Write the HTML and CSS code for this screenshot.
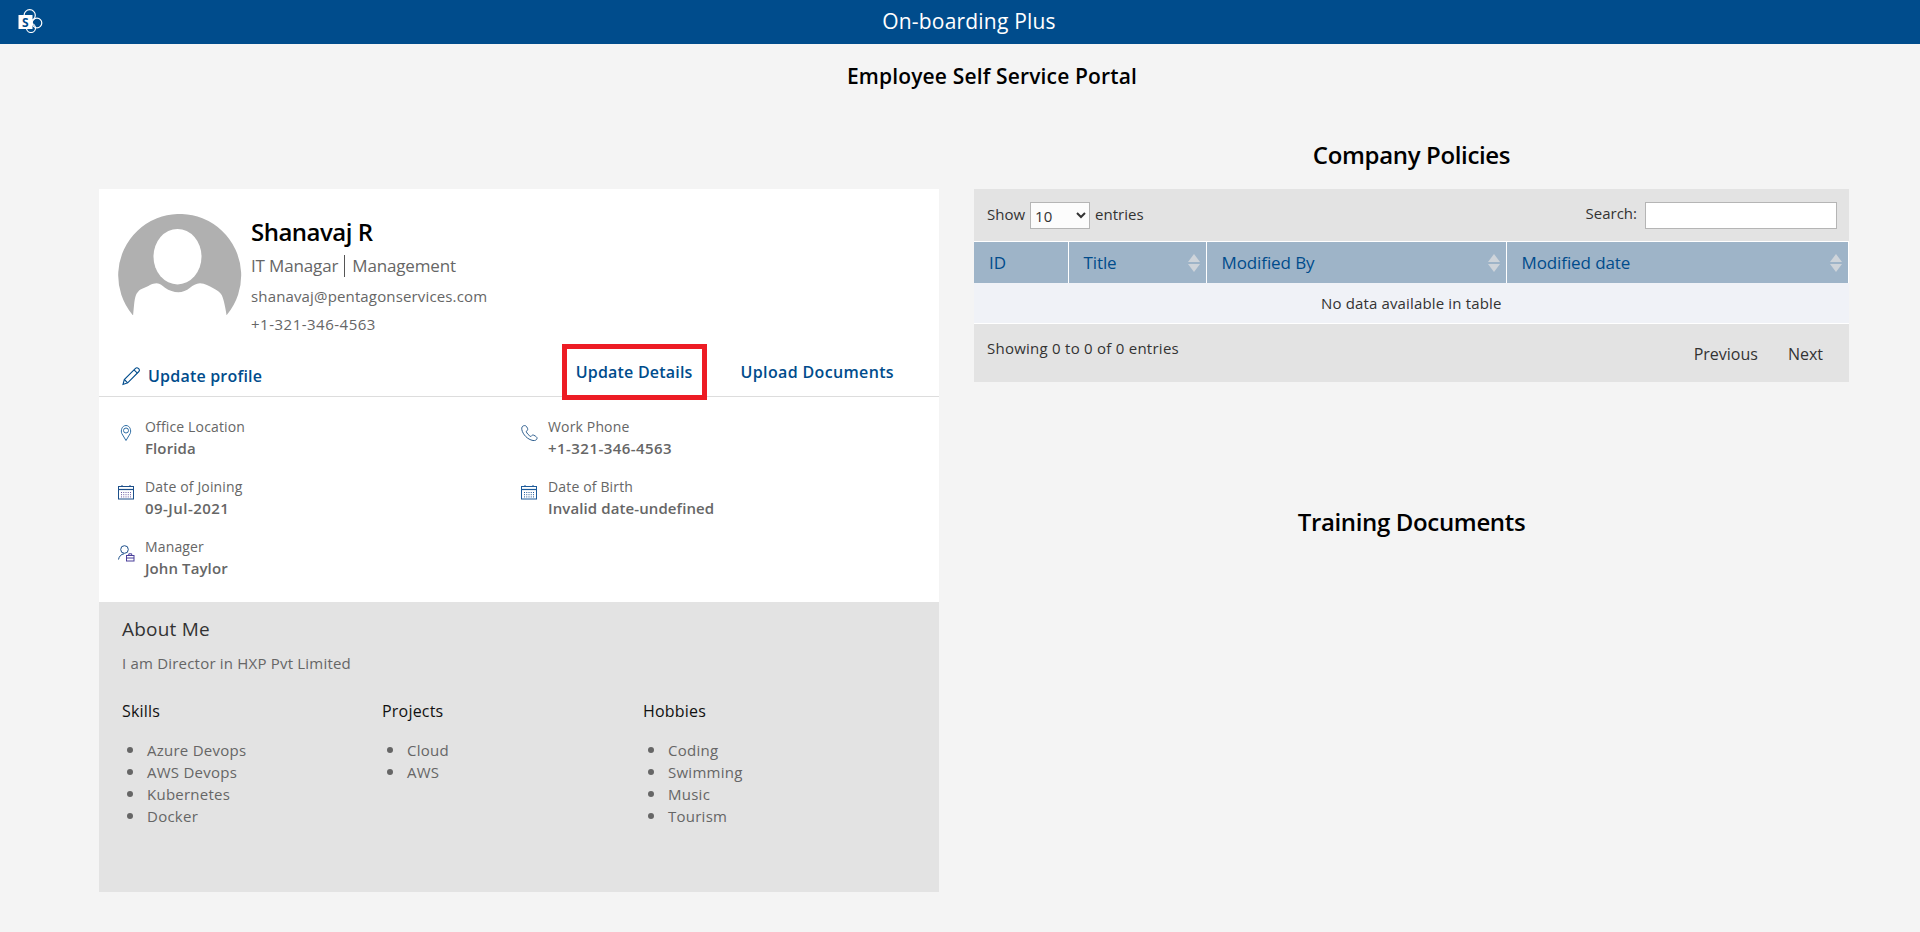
FILE: index.html
```html
<!DOCTYPE html>
<html lang="en">
<head>
    <meta charset="UTF-8">
    <title>On-boarding Plus</title>
    <link rel="stylesheet" href="styles.css">
</head>
<body>

    <header class="topbar">
        <svg class="sp-logo" viewBox="0 0 26 24" width="26" height="24">
            <circle cx="11.7" cy="6.3" r="5.6" fill="none" stroke="#fff" stroke-width="1.2"/>
            <circle cx="19" cy="14" r="4.8" fill="none" stroke="#fff" stroke-width="1.2"/>
            <circle cx="13" cy="19" r="4.5" fill="none" stroke="#fff" stroke-width="1.2"/>
            <rect x="0.5" y="6" width="14" height="14" fill="#fff"/>
            <text x="4" y="17.5" class="sp-letter">S</text>
        </svg>
        <span class="topbar-title">On-boarding Plus</span>
    </header>

    <main class="page">
        <h1 class="page-title">Employee Self Service Portal</h1>

        <div class="columns">
            <section class="profile">
                <div class="profile-top">
                    <svg class="avatar" viewBox="0 0 124 104" width="124" height="104">
                        <path d="M14.600 101A61.500 61.500 0 1 1 108.800 101Z" fill="#b0b0b0"/>
                        <ellipse cx="59.500" cy="42.700" rx="24" ry="27.700" fill="#fff"/>
                        <path d="M15 102C16 94 16 86 18 81C20 77 22 75.500 25.300 74.300C30 72.500 34 69.300 38.700 69.300C42 69.300 44.500 72 47 73.700C51 76.500 56 78.300 60.300 78.300C64.500 78.300 68.500 76.500 72 73.700C75 71.500 78 69.300 82 69.300C87 69.300 91 72 95.300 74.300C99 76.300 102 78 103.700 81C106 86 107.500 94 108.700 102Z" fill="#fff"/>
                    </svg>
                    <div class="who">
                        <h2 class="name">Shanavaj R</h2>
                        <p class="role"><span class="role-job">IT Managar</span><span>Management</span></p>
                        <p class="contact">shanavaj@pentagonservices.com</p>
                        <p class="contact contact-phone">+1-321-346-4563</p>
                    </div>
                </div>

                <div class="actions">
                    <a class="action action-edit" href="#">
                        <svg viewBox="0 0 20 20" width="20" height="20" fill="none" stroke="#004c8c" stroke-width="1.1">
                            <path d="M2 18.500L3.300 13.500L14.500 2.300C15.300 1.500 16.500 1.500 17.300 2.300L17.900 2.900C18.600 3.700 18.600 4.800 17.900 5.500L6.700 16.800Z"/>
                            <path d="M3.300 13.500L6.700 16.800M13 3.800L16.400 7.100"/>
                        </svg>
                        Update profile
                    </a>
                    <div class="action-group">
                        <a class="action action-marked" href="#">Update Details<span class="red-box"></span></a>
                        <a class="action action-upload" href="#">Upload Documents</a>
                    </div>
                </div>

                <div class="details">
                    <div class="detail">
                        <svg viewBox="0 0 17 17" width="17" height="17" fill="none" stroke="#2f6ea5" stroke-width="1">
                            <path d="M8 15.500L3.800 8.500C2.500 5.500 4 .5 8 .5C12 .5 13.500 5.500 12.200 8.500Z"/>
                            <circle cx="8" cy="5.500" r="2.500"/>
                        </svg>
                        <div><span class="detail-label">Office Location</span><b class="detail-value">Florida</b></div>
                    </div>
                    <div class="detail">
                        <svg viewBox="0 0 17 17" width="17" height="17" fill="none" stroke="#2f5f8f" stroke-width="1">
                            <path d="M2.500 .8C1.200 1.200 .5 2.500 .8 4.500C1.800 9.500 6.500 14.500 12 15.500C14 15.800 15.800 15 16 13.500C16.200 12.500 15.500 11.800 14.500 11.200L13 10.300C12 9.800 11.200 10 10.500 10.800L9.800 11.500C7.800 10.500 6 8.500 5.200 6.500L6 5.800C6.800 5 6.900 4.300 6.500 3.300L5.500 1.500C4.800 .6 3.600 .4 2.500 .8Z"/>
                        </svg>
                        <div><span class="detail-label">Work Phone</span><b class="detail-value detail-num">+1-321-346-4563</b></div>
                    </div>
                    <div class="detail">
                        <svg viewBox="0 0 17 17" width="17" height="17" fill="none" stroke="#1c4f8a">
                            <rect x=".5" y="1.500" width="15" height="12.500"/>
                            <path d="M0 4.500H16" stroke-width="1.200"/>
                            <path d="M4 0V2M12 0V2"/>
                            <path d="M3 7.500H13M3 9.700H13M3 11.900H13" stroke="#6a5aa0" stroke-dasharray="1 1.250"/>
                        </svg>
                        <div><span class="detail-label">Date of Joining</span><b class="detail-value detail-num">09-Jul-2021</b></div>
                    </div>
                    <div class="detail">
                        <svg viewBox="0 0 17 17" width="17" height="17" fill="none" stroke="#1c5a9a">
                            <rect x=".5" y="1.500" width="15" height="12.500"/>
                            <path d="M0 4.500H16" stroke-width="1.200"/>
                            <path d="M4 0V2M12 0V2"/>
                            <path d="M3 7.500H13M3 9.700H13M3 11.900H13" stroke-dasharray="1 1.250"/>
                        </svg>
                        <div><span class="detail-label">Date of Birth</span><b class="detail-value">Invalid date-undefined</b></div>
                    </div>
                    <div class="detail">
                        <svg viewBox="0 0 17 17" width="17" height="17" fill="none" stroke="#1c4f8a" stroke-width="1">
                            <circle cx="6.500" cy="4.500" r="3.800"/>
                            <path d="M.5 14.500C1 11.500 3 9.300 6 8.800"/>
                            <rect x="8.500" y="10.500" width="7.500" height="5.500" stroke="#4a3f9a"/>
                            <path d="M10.800 10.500V8.800H13.700V10.500M8.500 13H16" stroke="#4a3f9a"/>
                        </svg>
                        <div><span class="detail-label">Manager</span><b class="detail-value">John Taylor</b></div>
                    </div>
                </div>

                <div class="about">
                    <h3 class="about-title">About Me</h3>
                    <p class="about-text">I am Director in HXP Pvt Limited</p>
                    <div class="about-lists">
                        <div>
                            <h4>Skills</h4>
                            <ul>
                                <li>Azure Devops</li>
                                <li>AWS Devops</li>
                                <li>Kubernetes</li>
                                <li>Docker</li>
                            </ul>
                        </div>
                        <div>
                            <h4>Projects</h4>
                            <ul>
                                <li>Cloud</li>
                                <li>AWS</li>
                            </ul>
                        </div>
                        <div>
                            <h4>Hobbies</h4>
                            <ul>
                                <li>Coding</li>
                                <li>Swimming</li>
                                <li>Music</li>
                                <li>Tourism</li>
                            </ul>
                        </div>
                    </div>
                </div>
            </section>

            <section class="side">
                <h2 class="side-title">Company Policies</h2>
                <div class="dt">
                    <div class="dt-top">
                        <label class="dt-label">Show
                            <select class="dt-select"><option>10</option></select>
                            entries</label>
                        <label class="dt-label dt-label-search">Search: <input class="dt-search" type="text"></label>
                    </div>
                    <table class="dt-table">
                        <colgroup>
                            <col class="col-id"><col class="col-title"><col class="col-by"><col>
                        </colgroup>
                        <thead>
                            <tr>
                                <th>ID</th>
                                <th class="sortable">Title</th>
                                <th class="sortable">Modified By</th>
                                <th class="sortable">Modified date</th>
                            </tr>
                        </thead>
                        <tbody>
                            <tr><td colspan="4">No data available in table</td></tr>
                        </tbody>
                    </table>
                    <div class="dt-bottom">
                        <span class="dt-info">Showing 0 to 0 of 0 entries</span>
                        <div class="dt-pages"><a href="#">Previous</a><a href="#">Next</a></div>
                    </div>
                </div>
                <h2 class="side-title training">Training Documents</h2>
            </section>
        </div>
    </main>

</body>
</html>
```

FILE: styles.css
```css
* {
    box-sizing: border-box;
}
body {
    font-family: "Open Sans", Arial, sans-serif;
    font-size: 15px;
    background-color: #f4f4f4;
    color: #333;
    margin: 0;
    padding: 0;
}
h1, h2, h3, h4, p, ul {
    margin: 0;
    padding: 0;
}
a {
    text-decoration: none;
}

.topbar {
    position: relative;
    height: 44px;
    padding: 0 0 2px 18px;
    background-color: #004c8c;
    color: white;
    display: flex;
    align-items: center;
    justify-content: center;
}
.sp-logo {
    position: absolute;
    left: 18px;
    top: 9px;
}
.sp-letter {
    font-size: 12px;
    font-weight: 700;
    fill: #004c8c;
}
.topbar-title {
    font-size: 21px;
    letter-spacing: 0.2px;
}

.page {
    padding: 0 35px 0 99px;
}
.page-title {
    font-size: 21px;
    font-weight: 600;
    color: black;
    text-align: center;
    letter-spacing: 0.15px;
    line-height: 28px;
    padding-top: 18px;
}
.columns {
    display: grid;
    grid-template-columns: 840px 875px;
    gap: 35px;
    margin-top: 49px;
}

.profile {
    background-color: white;
    margin-top: 50px;
}
.profile-top {
    display: flex;
    padding: 25px 0 0 19px;
}
.avatar {
    flex: none;
}
.who {
    margin-left: 9px;
}
.name {
    font-size: 24px;
    font-weight: 600;
    line-height: 30px;
    color: black;
    letter-spacing: -0.5px;
    margin-top: 3px;
}
.role {
    font-size: 17px;
    color: #666;
    line-height: 22px;
    letter-spacing: -0.15px;
    margin-top: 8px;
    display: flex;
}
.role-job {
    border-right: 1px solid #555;
    padding-right: 6px;
    margin-right: 7px;
}
.contact {
    font-size: 15px;
    color: #666;
    line-height: 20px;
    letter-spacing: 0.15px;
    margin-top: 9px;
}
.contact-phone {
    letter-spacing: 0.5px;
    margin-top: 8px;
}

.actions {
    display: flex;
    justify-content: space-between;
    align-items: flex-end;
    height: 63px;
    padding: 0 45px 0 22px;
    border-bottom: 1px solid #ddd;
}
.action {
    position: relative;
    font-size: 16px;
    font-weight: 600;
    color: #004c8c;
    letter-spacing: 0.2px;
    line-height: 22px;
    margin-bottom: 13px;
    display: inline-block;
}
.action-upload {
    letter-spacing: 0.35px;
}
.action-edit {
    display: flex;
    align-items: center;
    gap: 7px;
    margin-bottom: 9px;
}
.action-group {
    display: flex;
    gap: 48px;
}
.red-box {
    position: absolute;
    left: -14px;
    right: -14px;
    top: -17px;
    height: 56px;
    border: 5px solid #ed1c24;
}

.details {
    display: grid;
    grid-template-columns: 403px 1fr;
    grid-auto-rows: 60px;
    padding: 19px 0 0 19px;
    height: 205px;
}
.detail {
    display: flex;
    gap: 10px;
}
.detail svg {
    flex: none;
    margin-top: 9px;
}
.detail-label, .detail-value {
    display: block;
    color: #666;
}
.detail-label {
    font-size: 14px;
    line-height: 22px;
    letter-spacing: 0.15px;
}
.detail-value {
    font-size: 15px;
    font-weight: 600;
    line-height: 21px;
    letter-spacing: 0.1px;
}
.detail-num {
    letter-spacing: 0.45px;
}

.about {
    background-color: #e3e3e3;
    height: 290px;
    padding: 14px 23px 0;
}
.about-title {
    font-size: 19px;
    font-weight: 400;
    color: #333;
    line-height: 26px;
    letter-spacing: 0.2px;
}
.about-text {
    color: #666;
    line-height: 20px;
    letter-spacing: 0.2px;
    margin-top: 11px;
}
.about-lists {
    display: grid;
    grid-template-columns: 260px 261px 1fr;
    margin-top: 27px;
}
.about-lists h4 {
    font-size: 16px;
    font-weight: 400;
    color: #111;
    line-height: 22px;
    letter-spacing: 0.2px;
}
.about-lists ul {
    margin-top: 17px;
    padding-left: 25px;
    color: #666;
    list-style: none;
}
.about-lists li {
    position: relative;
    line-height: 22px;
    letter-spacing: 0.25px;
}
.about-lists li::before {
    content: "";
    position: absolute;
    left: -20px;
    top: 8px;
    width: 6px;
    height: 6px;
    border-radius: 50%;
    background-color: #666;
}

.side-title {
    font-size: 24px;
    font-weight: 600;
    color: black;
    text-align: center;
    letter-spacing: -0.35px;
    line-height: 32px;
    height: 50px;
}
.training {
    margin-top: 124px;
}
.dt {
    background-color: #e3e3e3;
}
.dt-top {
    display: flex;
    justify-content: space-between;
    align-items: center;
    height: 52px;
    padding: 0 12px 0 13px;
}
.dt-label {
    display: flex;
    align-items: center;
    gap: 5px;
    line-height: 20px;
    padding-bottom: 2px;
}
.dt-label-search {
    gap: 8px;
    padding-bottom: 5px;
}
.dt-select {
    width: 60px;
    height: 27px;
    margin-top: 3px;
    border: 1px solid #b5b5b5;
    background-color: #fcfcfc;
    font-family: inherit;
    font-size: 15px;
    color: #333;
}
.dt-search {
    width: 192px;
    height: 27px;
    margin: 6px 0 0;
    border: 1px solid #b5b5b5;
    background-color: white;
}
.dt-table {
    width: 100%;
    table-layout: fixed;
    border-collapse: collapse;
    border-top: 1px solid white;
}
.col-id {
    width: 94px;
}
.col-title {
    width: 138px;
}
.col-by {
    width: 300px;
}
.dt-table th {
    position: relative;
    height: 41px;
    background-color: #9eb4c8;
    color: #004c8c;
    font-size: 17px;
    font-weight: 400;
    text-align: left;
    padding: 0 15px;
    letter-spacing: -0.1px;
    border-right: 1px solid white;
}
.dt-table td {
    height: 41px;
    background-color: #f0f2f7;
    text-align: center;
    letter-spacing: 0.15px;
    border-bottom: 1px solid white;
}
.sortable::before, .sortable::after {
    content: "";
    position: absolute;
    right: 6px;
    border-left: 6px solid transparent;
    border-right: 6px solid transparent;
}
.sortable::before {
    top: 12px;
    border-bottom: 8px solid #ced4da;
}
.sortable::after {
    top: 22px;
    border-top: 8px solid #ced4da;
}
.dt-bottom {
    display: flex;
    justify-content: space-between;
    height: 58px;
    padding: 14px 26px 0 13px;
}
.dt-info {
    letter-spacing: 0.25px;
    line-height: 20px;
}
.dt-pages {
    display: flex;
    gap: 30px;
    font-size: 16px;
    line-height: 22px;
    padding-top: 5px;
}
.dt-pages a {
    color: #333;
}
```
